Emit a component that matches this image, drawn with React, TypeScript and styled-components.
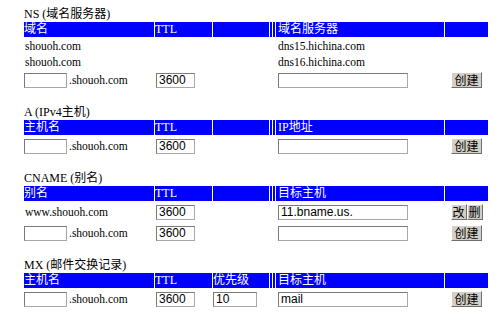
import React from "react";
import styled, { createGlobalStyle } from "styled-components";

const GlobalStyle = createGlobalStyle`
    html, body {
        margin: 0;
        padding: 0;
        background: #ffffff;
    }
    body {
        font-family: "Liberation Serif", "Noto Sans CJK SC", serif;
        font-size: 12px;
        color: #000000;
    }
`;

const COLUMNS = "130px 57px 56px 2px 2px 168px 43px";

const Page = styled.div`
    display: flex;
    flex-direction: column;
    gap: 14px;
    width: 500px;
    padding: 6px 0 0 24px;
    box-sizing: border-box;
`;

const Section = styled.section`
    display: flex;
    flex-direction: column;
`;

const Title = styled.div`
    height: 16px;
    line-height: 16px;
    font-size: 12px;
    white-space: nowrap;
`;

const Table = styled.div`
    display: flex;
    flex-direction: column;
    gap: 1px;
`;

const Row = styled.div<{ $h: number }>`
    display: grid;
    grid-template-columns: ${COLUMNS};
    column-gap: 1px;
    height: ${(p) => p.$h}px;
    align-items: center;
`;

const HeadCell = styled.div<{ $pad?: number }>`
    height: 100%;
    background: #0000ff;
    color: #ffffff;
    line-height: 15px;
    padding-left: ${(p) => p.$pad ?? 1}px;
    white-space: nowrap;
    overflow: hidden;
`;

const Cell = styled.div<{ $pad?: number; $center?: boolean }>`
    display: flex;
    align-items: center;
    justify-content: ${(p) => (p.$center ? "center" : "flex-start")};
    padding-left: ${(p) => p.$pad ?? 0}px;
    white-space: nowrap;
    grid-column: ${(p) => (p.$center ? "7" : "auto")};
`;

const TargetCell = styled(Cell)`
    grid-column: 6;
`;

const Suffix = styled.span`
    margin-left: 2px;
    font-size: 11.5px;
`;

const Plain = styled.span`
    font-size: 11.5px;
`;

const TextInput = styled.input<{ $w: number }>`
    width: ${(p) => p.$w}px;
    height: 15px;
    box-sizing: border-box;
    margin: 0;
    padding: 0 2px;
    border: 1px solid #7a7a7a;
    border-right-color: #a8a8a8;
    border-bottom-color: #a8a8a8;
    font-family: "Liberation Sans", Arial, sans-serif;
    font-size: 12px;
    color: #000000;
    background: #ffffff;
    outline: none;
`;

const ButtonGroup = styled.div`
    display: flex;
`;

const Button = styled.button<{ $w?: number }>`
    width: ${(p) => p.$w ?? 31}px;
    height: 16px;
    margin: 0;
    padding: 0;
    box-sizing: border-box;
    background: #d4d0c8;
    border: 1px solid;
    border-color: #ffffff #6e6e6e #6e6e6e #ffffff;
    font-family: "Noto Sans CJK SC", sans-serif;
    font-size: 12px;
    line-height: 14px;
    color: #000000;
`;

const Header: React.FC<{ name: string; target: string; prio?: string }> = ({ name, target, prio }) => (
    <Row $h={15}>
        <HeadCell $pad={0}>{name}</HeadCell>
        <HeadCell $pad={0}>TTL</HeadCell>
        <HeadCell $pad={0}>{prio ?? ""}</HeadCell>
        <HeadCell />
        <HeadCell />
        <HeadCell $pad={2}>{target}</HeadCell>
        <HeadCell />
    </Row>
);

const NewHost: React.FC = () => (
    <Cell>
        <TextInput $w={43} defaultValue="" />
        <Suffix>.shouoh.com</Suffix>
    </Cell>
);

const TtlInput: React.FC = () => (
    <Cell $pad={1}>
        <TextInput $w={39} defaultValue="3600" />
    </Cell>
);

const CreateButton: React.FC = () => (
    <Cell $center>
        <Button>创建</Button>
    </Cell>
);

export default function App() {
    return (
        <>
            <GlobalStyle />
            <Page>
                <Section>
                    <Title>NS (域名服务器)</Title>
                    <Table>
                        <Header name="域名" target="域名服务器" />
                        <Row $h={15}>
                            <Cell $pad={1}><Plain>shouoh.com</Plain></Cell>
                            <TargetCell $pad={2}><Plain>dns15.hichina.com</Plain></TargetCell>
                        </Row>
                        <Row $h={15}>
                            <Cell $pad={1}><Plain>shouoh.com</Plain></Cell>
                            <TargetCell $pad={2}><Plain>dns16.hichina.com</Plain></TargetCell>
                        </Row>
                        <Row $h={20}>
                            <NewHost />
                            <TtlInput />
                            <Cell />
                            <TargetCell $pad={2}><TextInput $w={130} defaultValue="" /></TargetCell>
                            <CreateButton />
                        </Row>
                    </Table>
                </Section>

                <Section>
                    <Title>A (IPv4主机)</Title>
                    <Table>
                        <Header name="主机名" target="IP地址" />
                        <Row $h={20}>
                            <NewHost />
                            <TtlInput />
                            <Cell />
                            <TargetCell $pad={2}><TextInput $w={130} defaultValue="" /></TargetCell>
                            <CreateButton />
                        </Row>
                    </Table>
                </Section>

                <Section>
                    <Title>CNAME (别名)</Title>
                    <Table>
                        <Header name="别名" target="目标主机" />
                        <Row $h={20}>
                            <Cell $pad={1}><Plain>www.shouoh.com</Plain></Cell>
                            <TtlInput />
                            <Cell />
                            <TargetCell $pad={2}><TextInput $w={130} defaultValue="11.bname.us." /></TargetCell>
                            <Cell $center>
                                <ButtonGroup>
                                    <Button $w={16}>改</Button>
                                    <Button $w={16}>删</Button>
                                </ButtonGroup>
                            </Cell>
                        </Row>
                        <Row $h={20}>
                            <NewHost />
                            <TtlInput />
                            <Cell />
                            <TargetCell $pad={2}><TextInput $w={130} defaultValue="" /></TargetCell>
                            <CreateButton />
                        </Row>
                    </Table>
                </Section>

                <Section>
                    <Title>MX (邮件交换记录)</Title>
                    <Table>
                        <Header name="主机名" target="目标主机" prio="优先级" />
                        <Row $h={20}>
                            <NewHost />
                            <TtlInput />
                            <Cell><TextInput $w={44} defaultValue="10" /></Cell>
                            <TargetCell $pad={2}><TextInput $w={130} defaultValue="mail" /></TargetCell>
                            <CreateButton />
                        </Row>
                    </Table>
                </Section>
            </Page>
        </>
    );
}
